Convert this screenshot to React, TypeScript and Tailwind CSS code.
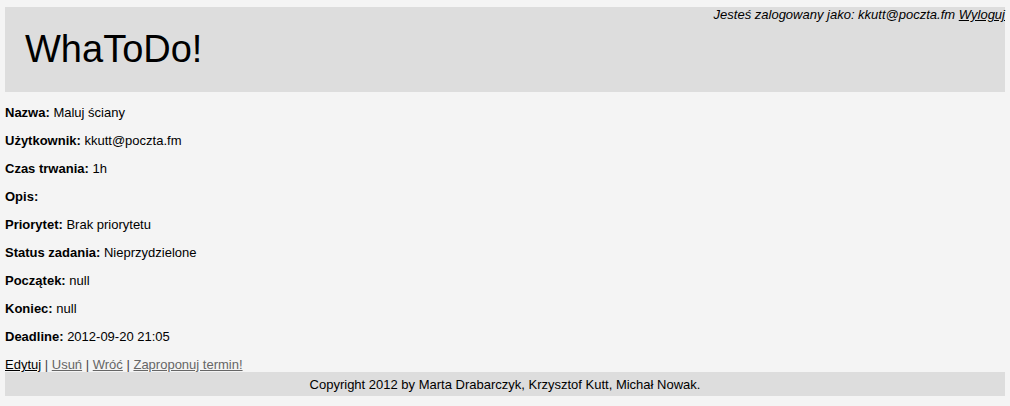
const rows: Array<{ label: string; value: string }> = [
  { label: 'Nazwa:', value: 'Maluj ściany' },
  { label: 'Użytkownik:', value: 'kkutt@poczta.fm' },
  { label: 'Czas trwania:', value: '1h' },
  { label: 'Opis:', value: '' },
  { label: 'Priorytet:', value: 'Brak priorytetu' },
  { label: 'Status zadania:', value: 'Nieprzydzielone' },
  { label: 'Początek:', value: 'null' },
  { label: 'Koniec:', value: 'null' },
  { label: 'Deadline:', value: '2012-09-20 21:05' },
];

export default function App() {
  return (
    <div className="min-h-[406px] bg-[#f4f4f4] px-[5px] pt-[7px] pb-[10px] font-['Liberation_Sans',Arial,sans-serif] text-[13px] leading-[15px] text-black">
      {/* nagłówek */}
      <div className="h-[85px] bg-[#dddddd] flex flex-col">
        <div className="text-right italic">
          Jesteś zalogowany jako: kkutt@poczta.fm{' '}
          <a href="#" className="underline text-black">Wyloguj</a>
        </div>
        <h1 className="pl-[20px] pt-[5px] text-[38px] leading-[44px]">WhaToDo!</h1>
      </div>

      {/* szczegóły zadania */}
      <div className="pt-[13px]">
        {rows.map((r) => (
          <p key={r.label} className="mb-[13px]">
            <b>{r.label}</b> {r.value}
          </p>
        ))}
        <p>
          <a href="#" className="underline text-black">Edytuj</a>
          <span className="text-[#444]"> | </span>
          <a href="#" className="underline text-[#666]">Usuń</a>
          <span className="text-[#444]"> | </span>
          <a href="#" className="underline text-[#666]">Wróć</a>
          <span className="text-[#444]"> | </span>
          <a href="#" className="underline text-[#666]">Zaproponuj termin!</a>
        </p>
      </div>

      {/* stopka */}
      <div className="h-[24px] bg-[#dddddd] flex items-center justify-center">
        Copyright 2012 by Marta Drabarczyk, Krzysztof Kutt, Michał Nowak.
      </div>
    </div>
  );
}
